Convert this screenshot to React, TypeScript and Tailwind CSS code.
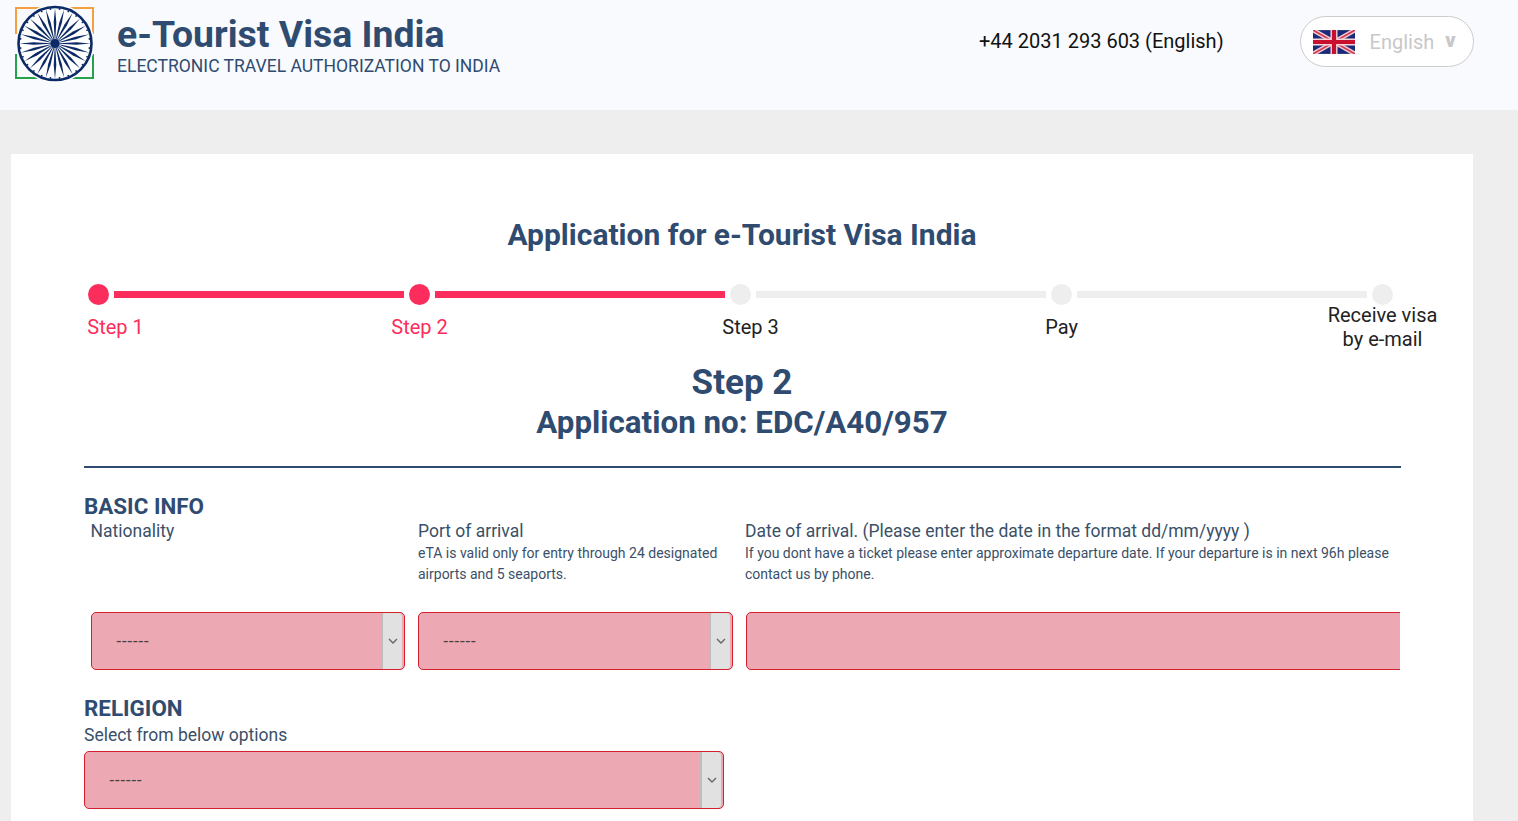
const NAVY = "#0b2a66";

function Logo() {
  const spokes = Array.from({ length: 24 }, (_, i) => (i * 360) / 24);
  return (
    <svg width="80" height="80" viewBox="0 0 80 80" className="shrink-0">
      <path d="M1 30V4h30" fill="none" stroke="#f5a040" strokeWidth="2" />
      <path d="M49 4h29v26" fill="none" stroke="#f5a040" strokeWidth="2" />
      <path d="M1 50v24h30" fill="none" stroke="#27a24c" strokeWidth="2" />
      <path d="M49 74h29V50" fill="none" stroke="#27a24c" strokeWidth="2" />
      <circle cx="40" cy="39.5" r="39.5" fill="#f9fbfe" />
      <circle cx="40" cy="39.5" r="36.5" fill="#fff" stroke={NAVY} strokeWidth="2.6" />
      {spokes.map((a) => (
        <path key={a} d="M39.9 39.5 L38.7 18 L40 4 L41.3 18 L40.1 39.5 Z" fill={NAVY} transform={`rotate(${a} 40 39.5)`} />
      ))}
      {spokes.map((a) => (
        <circle key={a} cx="40" cy="4.8" r="0.9" fill={NAVY} transform={`rotate(${a + 7.5} 40 39.5)`} />
      ))}
      <circle cx="40" cy="39.5" r="4.5" fill={NAVY} />
    </svg>
  );
}

function Flag() {
  return (
    <svg width="42" height="24" viewBox="0 0 60 34" className="shrink-0">
      <rect width="60" height="34" fill="#1b2a78" />
      <path d="M0 0L60 34M60 0L0 34" stroke="#f3c9d0" strokeWidth="6.5" />
      <path d="M0 0L60 34M60 0L0 34" stroke="#d1364f" strokeWidth="2.4" />
      <path d="M30 0V34M0 17H60" stroke="#f3d5da" strokeWidth="10" />
      <path d="M30 0V34M0 17H60" stroke="#c8102e" strokeWidth="6" />
    </svg>
  );
}

function Select({ className }: { className: string }) {
  return (
    <div className={`flex h-[58px] items-stretch rounded-[5px] border border-[#d3202f] bg-[#eda9b3] ${className}`}>
      <div className="flex flex-1 items-center pb-[2px] pl-6 font-['Liberation_Sans',sans-serif] text-[16.5px] font-medium text-[#444]">------</div>
      <div className="flex w-[21px] items-center justify-center rounded-r-[4px] border-l-2 border-[#bdbdbd] bg-[#e1e1e1]">
        <svg width="10" height="6" viewBox="0 0 10 6">
          <path d="M1 1l4 4 4-4" fill="none" stroke="#666" strokeWidth="1.4" />
        </svg>
      </div>
    </div>
  );
}

function Dot({ on }: { on?: boolean }) {
  return <div className={`h-[21px] w-[21px] shrink-0 rounded-full ${on ? "bg-[#fb2d5c]" : "bg-[#eeeeee]"}`} />;
}

function Line({ on }: { on?: boolean }) {
  return <div className={`mx-[5px] h-[7px] w-[290px] shrink-0 ${on ? "bg-[#fb2d5c]" : "bg-[#eeeeee]"}`} />;
}

export default function App() {
  return (
    <div className="flex h-[821px] flex-col overflow-hidden bg-[#eeeeee] font-['Roboto',sans-serif] text-[#2f4b70]">
      <header className="flex h-[110px] shrink-0 items-start bg-[#f8fafd]">
        <div className="ml-[15px] mt-[4px]"><Logo /></div>
        <div className="ml-[22px] mt-[13px]">
          <div className="text-[37.4px] font-bold leading-[43px]">e-Tourist Visa India</div>
          <div className="w-[400px] text-[17.55px] leading-[20px]">ELECTRONIC TRAVEL AUTHORIZATION TO INDIA</div>
        </div>
        <div className="ml-[462px] mt-[29px] text-[20px] leading-[24px] text-[#111]">+44 2031 293 603 (English)</div>
        <div className="ml-[76px] mt-[16px] flex h-[51px] w-[174px] items-center rounded-full border border-[#cccccc] bg-white pl-[12px]">
          <Flag />
          <span className="ml-[15px] text-[20px] text-[#c8c8c8]">English</span>
          <span className="ml-[11px] mt-[-3px] text-[20px] font-black text-[#c8c8c8]">v</span>
        </div>
      </header>

      <main className="ml-[11px] mt-[44px] w-[1462px] flex-1 bg-white pt-[62px]">
        <h1 className="text-center text-[30px] font-bold leading-[38px]">Application for e-Tourist Visa India</h1>

        <div className="ml-[77px] mt-[29px] flex h-[22px] items-center">
          <Dot on /><Line on /><Dot on /><Line on /><Dot /><Line /><Dot /><Line /><Dot />
        </div>

        <div className="mt-[-3px] flex h-[50px] items-center text-center text-[20px] leading-[24px] text-[#222]">
          <div className="ml-[44.5px] w-[120px] text-[#fb2d5c]">Step 1</div>
          <div className="ml-[184px] w-[120px] text-[#fb2d5c]">Step 2</div>
          <div className="ml-[211px] w-[120px]">Step 3</div>
          <div className="ml-[191px] w-[120px]">Pay</div>
          <div className="ml-[201px] w-[120px]">Receive visa<br />by e-mail</div>
        </div>

        <div className="mt-[10px] text-center font-bold">
          <div className="text-[35px] leading-[42px]">Step 2</div>
          <div className="text-[31.3px] leading-[38px]">Application no: EDC/A40/957</div>
        </div>

        <div className="mx-[73px] mt-[24px] w-[1317px] border-t-2 border-[#2f4b70] pt-[25px]">
          <h2 className="text-[22.4px] font-bold leading-[26px]">BASIC INFO</h2>
          <div className="ml-[7px] mt-[-1px] grid grid-cols-[314px_315px_654px] gap-x-[13px] text-[#3a5068]">
            <div className="ml-[-0.5px] text-[17.5px] leading-[26px]">Nationality</div>
            <div>
              <div className="text-[17.5px] leading-[26px]">Port of arrival</div>
              <p className="mt-[-1px] text-[14px] leading-[21px]">eTA is valid only for entry through 24 designated airports and 5 seaports.</p>
            </div>
            <div className="ml-[-1px]">
              <div className="text-[17.5px] leading-[26px]">Date of arrival. (Please enter the date in the format dd/mm/yyyy )</div>
              <p className="mt-[-1px] text-[14px] leading-[21px]">If you dont have a ticket please enter approximate departure date. If your departure is in next 96h please contact us by phone.</p>
            </div>
            <Select className="mt-[27px] pr-[2px]" />
            <Select className="mt-[27px] pr-[2px]" />
            <div className="mt-[27px] h-[58px] overflow-hidden">
              <div className="h-[58px] w-[658px] rounded-[5px] border border-[#d3202f] bg-[#eda9b3]" />
            </div>
          </div>

          <h2 className="mt-[24px] text-[22.4px] font-bold leading-[28px]">RELIGION</h2>
          <div className="mt-0 text-[17.5px] leading-[26px] text-[#3a5068]">Select from below options</div>
          <Select className="mt-[3px] w-[640px] pr-[2px]" />
        </div>
      </main>
    </div>
  );
}
